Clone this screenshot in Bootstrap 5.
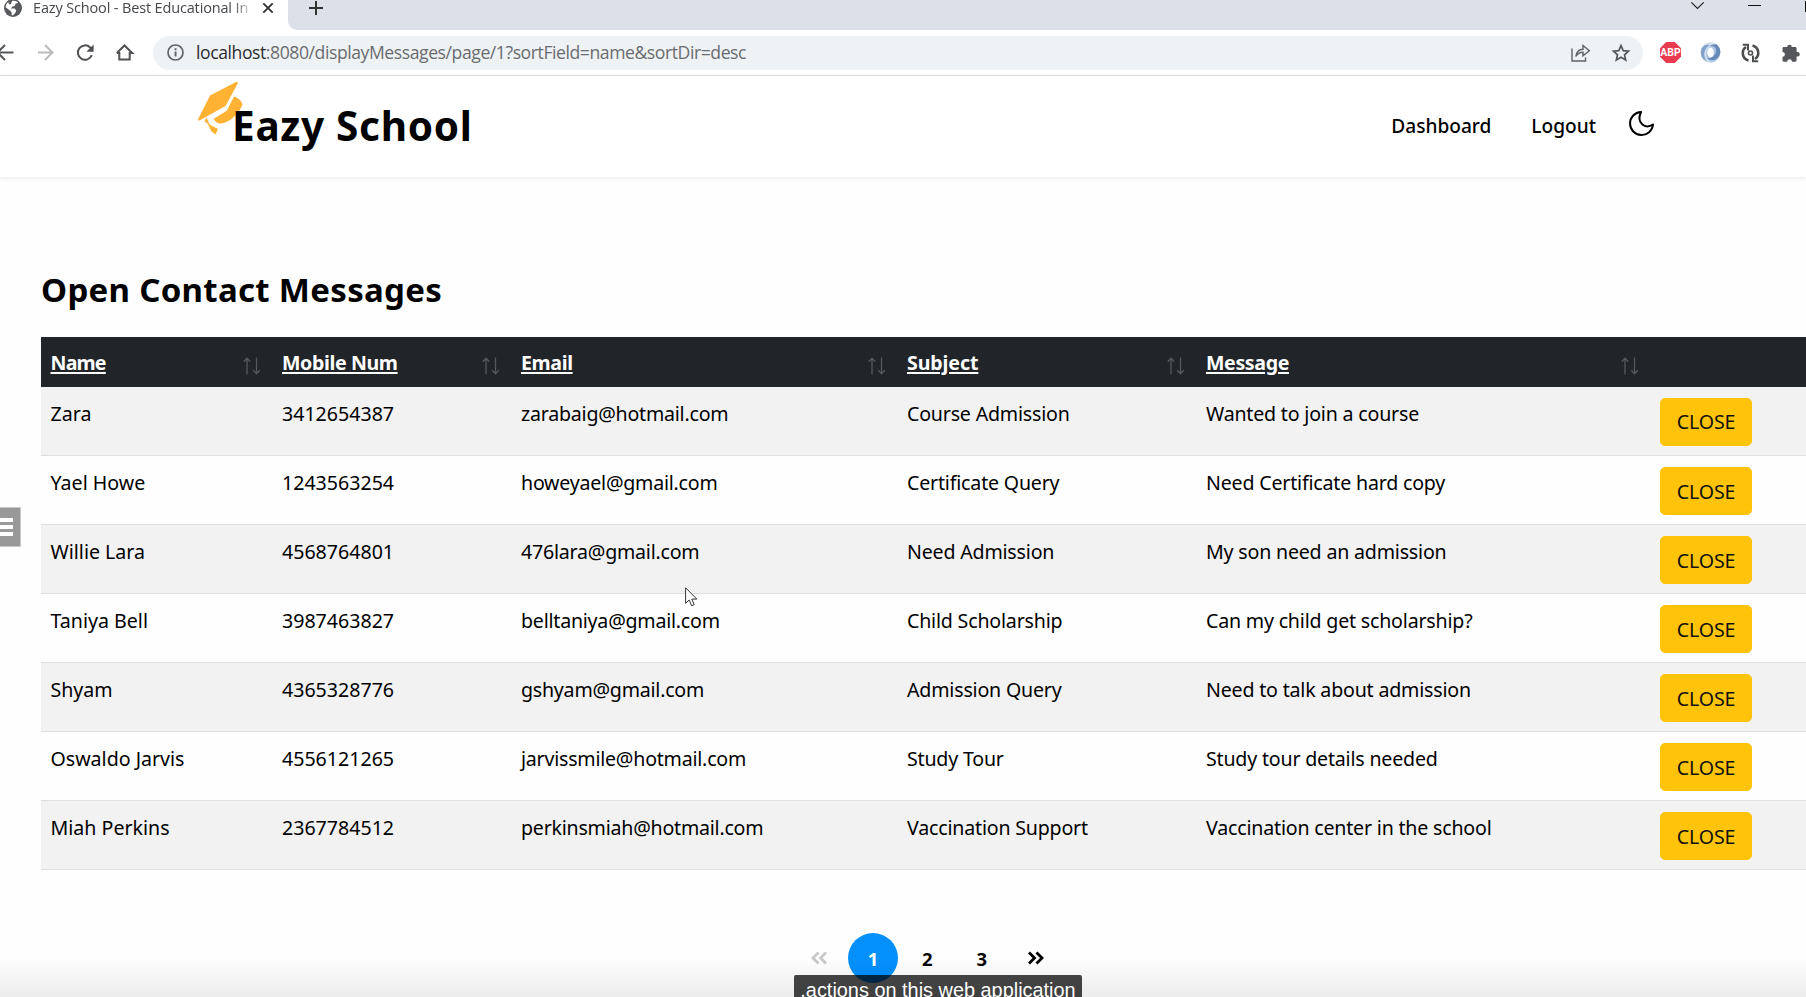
<!DOCTYPE html>
<html lang="en">
<head>
<meta charset="utf-8">
<meta name="viewport" content="width=device-width, initial-scale=1">
<title>Eazy School - Best Educational Institute</title>
<link href="https://cdn.jsdelivr.net/npm/bootstrap@5.3.0/dist/css/bootstrap.min.css" rel="stylesheet">
<style>
  body { font-family: "Noto Sans", sans-serif; color: #000; background: #fefefe; height: 997px; overflow: hidden; }
  svg { display: block; flex: none; overflow: visible; }
  .tabstrip { height: 30px; background: #dce0e9; }
  .tab { width: 288px; height: 30px; background: #fff; padding-left: 4px; }
  .tab-title { width: 219px; margin: -2px 0 0 11px; font: 14.5px/20px "Open Sans", sans-serif; letter-spacing: -.15px; color: #45484c; white-space: nowrap;
    -webkit-mask-image: linear-gradient(90deg, #000 200px, transparent 222px); mask-image: linear-gradient(90deg, #000 200px, transparent 222px); }
  .strip-rest { background: #dce0e9; border-bottom-left-radius: 9px; padding-left: 21px; }
  .tabstrip-curve { background: #fff; }
  .toolbar { height: 46px; background: #fff; border-bottom: 1px solid #dcdee0; }
  .nav-icons { width: 153px; gap: 22px; margin-left: -4px; }
  .address { width: 1490px; height: 34px; margin-left: 4px; border-radius: 17px; background: #eff2f4; padding: 0 13px 0 14px; }
  .url { font: 17.6px/24px "Open Sans", sans-serif; color: #696c70; margin: -1px 0 0 12px; letter-spacing: -.43px; white-space: nowrap; }
  .url b { color: #2b2d30; font-weight: 400; }
  .site-header { height: 101px; background: #fff; box-shadow: 0 1px 5px rgba(0,0,0,.09); padding: 0 152px 0 198px; }
  .brand-name { font-size: 40.5px; line-height: 48px; font-weight: 700; letter-spacing: .7px; margin: -2px 0 0 -11px; }
  .site-nav { gap: 40px; font-size: 19.1px; font-weight: 500; }
  .site-nav a { color: #000; text-decoration: none; }
  .page-title { font-size: 33px; line-height: 42px; font-weight: 700; letter-spacing: .3px; margin: 92px 0 0; padding-bottom: 26px; }
  main { padding-left: 41px; }
  .messages { table-layout: fixed; width: 1765px; margin: 0; font-size: 19.6px; --bs-table-striped-bg: #f2f2f2; --bs-table-color: #000; --bs-table-striped-color: #000; --bs-table-bg: transparent; }
  .messages th { height: 50px; padding: 9px 12px 9px 9.5px; background: #212529; border: 0; line-height: 31px; box-shadow: none; letter-spacing: -.38px; }
  .messages th a { color: #fff; text-underline-offset: 2px; text-decoration-thickness: 2px; margin-top: -2px; }
  .messages th:nth-child(1) { letter-spacing: -.8px; }
  .messages th:nth-child(4) { letter-spacing: -.1px; }
  .messages td { height: 68.9px; padding: 11px 9.5px 9px; line-height: 31px; border-bottom: 1px solid #dedfe0; white-space: nowrap; letter-spacing: -.19px; }
  .messages td:nth-child(1), .messages td:nth-child(2) { letter-spacing: 0; }
  .messages td:nth-child(3) { letter-spacing: -.23px; }
  .btn-close-msg { --bs-btn-bg: #ffc409; --bs-btn-border-color: #ffc409; --bs-btn-color: #111; width: 92px; height: 48px; padding: 0; font-size: 19.6px; border-radius: 5px; display: block; letter-spacing: -.1px; }
  .pager { gap: 4.4px; margin: 63px 0 0 752.6px; font-weight: 700; font-size: 18.5px; }
  .pager a { width: 50px; height: 50px; color: #000; text-decoration: none; }
  .pager .current { background: #0490fc; color: #fff; }
  .fade-foot { height: 40px; background: linear-gradient(transparent, rgba(0,0,0,.07)); }
  .caption-line { left: 794px; top: 975px; width: 288px; height: 26px; background: rgba(0,0,0,.73); color: #fff; border-radius: 2px; font: 19.9px/30px "Liberation Sans", sans-serif; white-space: nowrap; text-align: center; }
  .side-handle { left: 0; top: 507px; width: 21px; height: 40px; background: #999; border: 1px solid #c9c9c9; border-left: 0; padding: 10px 0; gap: 3px; }
  .side-handle i { width: 13px; height: 4.4px; background: #fff; }
  .pointer { left: 685px; top: 587px; }
</style>
</head>
<body>
<div class="tabstrip d-flex">
  <div class="tab d-flex align-items-start">
    <svg width="18" height="18" viewBox="0 0 18 18" style="margin-top:-1px"><circle cx="9" cy="9" r="9" fill="#57595c"/><path d="M8 2c2.500-.8 5 .3 6.200 1.800l-2.800 1-.6 2.200-2.300.4-1.500 2h3.600l1.600 1.800-.6 2.400-2.800 2.800-1.300-.6.200-2.600L5.200 11 1.600 8.200C1.800 6 2.700 4.300 4.300 3l.7 2.400L7 5z" fill="#fff"/></svg>
    <div class="tab-title">Eazy School - Best Educational In</div>
    <svg width="10" height="10" viewBox="0 0 10 10" style="margin:3px 0 0 11px" stroke="#333" stroke-width="1.900"><path d="M.3.3 9.700 9.700M9.700.3.3 9.700"/></svg>
  </div>
  <div class="tabstrip-curve flex-grow-1 d-flex">
    <div class="strip-rest flex-grow-1 d-flex align-items-start">
      <svg width="14" height="14" viewBox="0 0 14 14" style="margin-top:1px" stroke="#333" stroke-width="2"><path d="M7 0v14M0 7h14"/></svg>
      <svg class="ms-auto" width="13" height="7" viewBox="0 0 13 7" style="margin-top:2px" fill="none" stroke="#222" stroke-width="1.200"><path d="M.3.3 6.500 6.500 12.700.3"/></svg>
      <svg width="13" height="2" viewBox="0 0 13 2" style="margin:5px 44px 0 44px"><path d="M0 0h13v1H0z" fill="#111"/></svg>
      <svg width="1" height="11" viewBox="0 0 1 11" style="margin-top:1px"><path d="M0 0h1v11H0z" fill="#111"/></svg>
    </div>
  </div>
</div>
<div class="toolbar d-flex align-items-center">
  <div class="nav-icons d-flex align-items-center">
    <svg width="18" height="18" viewBox="0 0 18 18" fill="none" stroke="#54565a" stroke-width="2"><path d="M17.500 8.500H2M9 1 1.500 8.500 9 16"/></svg>
    <svg width="17" height="18" viewBox="0 0 17 18" fill="none" stroke="#b9bbbd" stroke-width="1.900" style="margin-left:1px"><path d="M1 8.500h14M8 1l7.500 7.500L8 16"/></svg>
    <svg width="18" height="18" viewBox="0 0 18 18" fill="none" stroke="#4f5154" stroke-width="2"><path d="M15.800 11.200A7.200 7.200 0 1 1 14.200 3.500L16 5.300"/><path d="M17.600.6v7.200h-7.200z" fill="#4f5154" stroke="none"/></svg>
    <svg width="17" height="17" viewBox="0 0 17 17" fill="none" stroke="#4f5154" stroke-width="2"><path d="M3.300 8v7.500h10.400V8M.8 9l7.700-7.500L16.200 9h-2.500M.8 9h2.500"/></svg>
  </div>
  <div class="address d-flex align-items-center">
    <svg width="17" height="17" viewBox="0 0 17 17"><circle cx="8.500" cy="8.500" r="7.500" fill="none" stroke="#5f6368" stroke-width="1.700"/><path d="M7.600 7.400h1.900v5H7.600zM7.600 4.300h1.900v1.900H7.600z" fill="#5f6368"/></svg>
    <div class="url"><b>localhost</b>:8080/displayMessages/page/1?sortField=name&amp;sortDir=desc</div>
    <svg class="ms-auto" width="19" height="18" viewBox="0 0 19 18" fill="none" stroke="#606266" stroke-width="1.400"><path d="M1 4.500V17h13.500v-3.500"/><path d="M4.800 12.500C5.500 8 8 5.500 12 5.300V1.500l6.300 5.300-6.300 5V8.300c-3.400 0-5.700 1.400-7.200 4.200z"/></svg>
    <svg width="18" height="18" viewBox="0 0 18 18" fill="none" stroke="#55575a" stroke-width="1.700" style="margin-left:22px"><path d="m9 1.700 2.200 5 5.300.5-4 3.600 1.200 5.300L9 13.300l-4.700 2.800 1.200-5.300-4-3.600 5.300-.5z"/></svg>
  </div>
  <div class="d-flex align-items-center" style="margin-left:17px;gap:19px">
    <svg width="21" height="21" viewBox="0 0 21 21"><path d="M6.200 0h8.600L21 6.200v8.600L14.800 21H6.200L0 14.800V6.200z" fill="#eb3b50"/><text x="10.500" y="14.300" text-anchor="middle" font-family="Roboto, sans-serif" font-size="10.400" font-weight="700" fill="#fff">ABP</text></svg>
    <svg width="21" height="21" viewBox="0 0 21 21"><circle cx="10.500" cy="10.500" r="10" fill="#a9c4e2"/><path d="M11 .5C1 1-2 11 4 17.500c2 2 5 3.200 8 2.800C7 18.500 5 15 6.500 10 7 6 9 3 16 2.200 14.500 1 13 .5 11 .5z" fill="#d3e1ef"/><path d="M10 4.200c6-1.700 8 4.800 4.500 8.800-2 2.700-5 3.700-7.500 3.200 4 3 9 2.500 12-2 2.500-4.500 1-9.200-2.500-12C13 2 11 3 10 4.200z" fill="#6789b6"/><path d="M2 6c-2.500 6 0 11.500 5 13.500C4 16 3.500 11 5.500 7.500 6.500 5 8 4 10 3 7 2 4 3 2 6z" fill="#7fa0c8"/><ellipse cx="10.500" cy="10.500" rx="3.200" ry="5" fill="#fff"/></svg>
    <svg width="19" height="20" viewBox="0 0 19 20" fill="none" stroke="#4c4d4f" stroke-width="2.600" style="margin-left:1px"><path d="M5 4A7.600 7.600 0 0 0 7.500 17.600M14 16A7.600 7.600 0 0 0 11.500 2.400"/><path d="M1.800 1.800H7v5.600M17.200 18.200H12v-5.600" stroke-width="2"/><circle cx="9.500" cy="10" r="2" stroke-width="1.600"/></svg>
    <svg width="18" height="18" viewBox="0 0 18 18" fill="#55575a" style="margin-left:3px"><path d="M5.200 3a2.300 2.300 0 0 1 4.600 0h3.400c.9 0 1.400.6 1.400 1.400V8h1a2.200 2.200 0 0 1 0 4.400h-1v3.900c0 .9-.5 1.400-1.400 1.400H10a2.400 2.400 0 0 0-4.800 0H2c-.9 0-1.500-.5-1.500-1.400v-3.500a2.400 2.400 0 0 0 0-4.800V4.400C.5 3.600 1.100 3 2 3z"/></svg>
  </div>
</div>

<header class="site-header d-flex align-items-center justify-content-between">
  <div class="d-flex align-items-start">
    <svg width="45" height="53" viewBox="0 0 45 53" fill="#ffb233" style="margin-top:-22px"><path d="M38 0c1.200-.5 2 .3 1.700 1.500L27.500 24 1.500 38.500C.5 39-.2 38 .2 37L12 13.500z"/><path d="M36 14.500c4 1.500 7.500 4 8.500 8C41 32 30 42 22 41.500c-2 0-5-2-6.500-4.500L29 28.500z"/><path d="m8.500 35.500 3 7 8.500 4.500-2.500 5.500-4-3-4-8-3-2z"/></svg>
    <div class="brand-name">Eazy School</div>
  </div>
  <nav class="site-nav d-flex align-items-center">
    <a href="#">Dashboard</a><a href="#">Logout</a>
    <svg width="25" height="25" viewBox="0 0 25 25" fill="none" stroke="#000" stroke-width="2" stroke-linejoin="round" style="margin:-6px 0 0 -7px"><path d="M12 1A11.500 11.500 0 1 0 24 13.500C16 18.500 7 12 12 1z"/></svg>
  </nav>
</header>

<main>
  <h1 class="page-title">Open Contact Messages</h1>
  <table class="table table-striped messages">
    <colgroup><col style="width:231.500px"><col style="width:239px"><col style="width:386px"><col style="width:299px"><col style="width:454px"><col></colgroup>
    <thead><tr id="head"></tr></thead>
    <tbody id="rows"></tbody>
  </table>
  <nav class="pager d-flex">
    <a class="d-flex align-items-center justify-content-center" href="#"><svg width="16" height="14" viewBox="0 0 16 14" fill="none" stroke="#c8c8c8" stroke-width="2.800"><path d="M7.500 1.500 2 7l5.500 5.500M15 1.500 9.500 7l5.500 5.500"/></svg></a>
    <a class="current rounded-circle d-flex align-items-center justify-content-center" href="#">1</a>
    <a class="d-flex align-items-center justify-content-center" href="#">2</a>
    <a class="d-flex align-items-center justify-content-center" href="#">3</a>
    <a class="d-flex align-items-center justify-content-center" href="#"><svg width="16" height="14" viewBox="0 0 16 14" fill="none" stroke="#000" stroke-width="2.800"><path d="M1 1.500 6.500 7 1 12.500M8.500 1.500 14 7l-5.500 5.500"/></svg></a>
  </nav>
</main>

<div class="fade-foot position-absolute bottom-0 start-0 w-100"></div>
<div class="side-handle position-absolute d-flex flex-column"><i></i><i></i><i></i></div>
<svg class="pointer position-absolute" width="13" height="20" viewBox="0 0 13 20"><path d="M.6.800v15.500l3.600-3.300 2.400 5.700 2.600-1.100-2.400-5.500h5z" fill="#fff" stroke="#333" stroke-width="1"/></svg>
<div class="caption-line position-absolute">.actions on this web application</div>

<script src="https://cdn.jsdelivr.net/npm/bootstrap@5.3.0/dist/js/bootstrap.bundle.min.js"></script>
<script>
  const arrows = '<svg class="mt-1" width="18" height="18" viewBox="0 0 18 18" fill="none" stroke="#54595d" stroke-width="1.300"><path d="M4 17.500V1.500M.7 4.800 4 1.200l3.300 3.600M13.500.5v16M10.200 13.200l3.300 3.600 3.300-3.600"/></svg>';
  const heads = ['Name', 'Mobile Num', 'Email', 'Subject', 'Message'];
  const rows = [
    ['Zara', '3412654387', 'zarabaig@hotmail.com', 'Course Admission', 'Wanted to join a course'],
    ['Yael Howe', '1243563254', 'howeyael@gmail.com', 'Certificate Query', 'Need Certificate hard copy'],
    ['Willie Lara', '4568764801', '476lara@gmail.com', 'Need Admission', 'My son need an admission'],
    ['Taniya Bell', '3987463827', 'belltaniya@gmail.com', 'Child Scholarship', 'Can my child get scholarship?'],
    ['Shyam', '4365328776', 'gshyam@gmail.com', 'Admission Query', 'Need to talk about admission'],
    ['Oswaldo Jarvis', '4556121265', 'jarvissmile@hotmail.com', 'Study Tour', 'Study tour details needed'],
    ['Miah Perkins', '2367784512', 'perkinsmiah@hotmail.com', 'Vaccination Support', 'Vaccination center in the school']
  ];
  document.getElementById('head').innerHTML = heads.map(h =>
    `<th><div class="d-flex justify-content-between align-items-center"><a href="#">${h}</a>${arrows}</div></th>`).join('') + '<th></th>';
  document.getElementById('rows').innerHTML = rows.map(r =>
    '<tr>' + r.map(c => `<td>${c}</td>`).join('') + '<td><button type="button" class="btn btn-warning btn-close-msg">CLOSE</button></td></tr>').join('');
</script>
</body>
</html>
